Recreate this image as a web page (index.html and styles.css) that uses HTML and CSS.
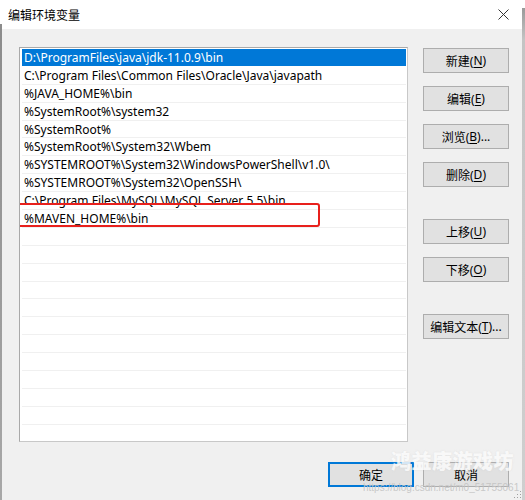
FILE: index.html
```html
<!DOCTYPE html>
<html lang="zh-CN">
<head>
<meta charset="utf-8">
<title>编辑环境变量</title>
<link rel="stylesheet" href="styles.css">
</head>
<body>
<div class="screen">
  <div class="edge-left"></div>
  <div class="dialog">
    <div class="titlebar">
      <span class="title">编辑环境变量</span>
      <svg class="close" width="11" height="11" viewBox="0 0 11 11"><path d="M0.5 0.5 L10.5 10.5 M10.5 0.5 L0.5 10.5" stroke="#333" stroke-width="1" fill="none"/></svg>
    </div>
    <div class="content">
      <div class="main">
        <div class="list">
          <div class="row selected">D:\ProgramFiles\java\jdk-11.0.9\bin</div>
          <div class="row">C:\Program Files\Common Files\Oracle\Java\javapath</div>
          <div class="row">%JAVA_HOME%\bin</div>
          <div class="row">%SystemRoot%\system32</div>
          <div class="row">%SystemRoot%</div>
          <div class="row">%SystemRoot%\System32\Wbem</div>
          <div class="row">%SYSTEMROOT%\System32\WindowsPowerShell\v1.0\</div>
          <div class="row">%SYSTEMROOT%\System32\OpenSSH\</div>
          <div class="row">C:\Program Files\MySQL\MySQL Server 5.5\bin</div>
          <div class="row">%MAVEN_HOME%\bin</div>
          <div class="row"></div><div class="row"></div><div class="row"></div><div class="row"></div>
          <div class="row"></div><div class="row"></div><div class="row"></div><div class="row"></div>
          <div class="row"></div><div class="row"></div><div class="row"></div><div class="row"></div>
          <div class="highlight"></div>
        </div>
        <div class="actions">
          <button class="btn">新建(<u>N</u>)</button>
          <button class="btn">编辑(<u>E</u>)</button>
          <button class="btn">浏览(<u>B</u>)...</button>
          <button class="btn">删除(<u>D</u>)</button>
          <button class="btn gap-big">上移(<u>U</u>)</button>
          <button class="btn">下移(<u>O</u>)</button>
          <button class="btn gap-big">编辑文本(<u>T</u>)...</button>
        </div>
      </div>
      <div class="footer">
        <button class="btn default">确定</button>
        <button class="btn">取消</button>
      </div>
    </div>
    <div class="watermark">鸿益康游戏坊</div>
    <div class="watermark-url">https://blog.csdn.net/m0_51755061</div>
    <div class="grip"></div>
  </div>
  <div class="edge-right"></div>
</div>
</body>
</html>
```
FILE: styles.css
```css
html, body {
  margin: 0;
  padding: 0;
  background: #f0f0f0;
}
.screen {
  display: flex;
  width: 525px;
  height: 500px;
  overflow: hidden;
  font-family: "Noto Sans", "Noto Sans CJK SC", sans-serif;
  font-size: 12px;
  color: #000;
}
.edge-left {
  width: 2px;
  background: linear-gradient(to bottom, #ffffff 0, #ffffff 24px, #8c8c8c 24px, #a8a8a8 100%);
}
.edge-right {
  width: 3px;
  background: linear-gradient(to bottom, #ffffff 0, #ffffff 8px, #9a9a9a 8px, #c4c4c4 40px, #cfcfcf 100%);
}
.dialog {
  flex: 1;
  position: relative;
  display: flex;
  flex-direction: column;
  background: #f0f0f0;
}
.titlebar {
  height: 29px;
  background: #ffffff;
  display: flex;
  align-items: center;
  justify-content: space-between;
  padding: 0 13px 0 6px;
}
.title {
  font-family: "Noto Sans CJK SC", sans-serif;
  font-size: 12px;
  color: #000;
  margin-top: -1px;
}
.close {
  display: block;
  margin-top: -1px;
}
.content {
  display: flex;
  flex-direction: column;
  padding: 18px 13px 0 17px;
}
.main {
  display: flex;
  gap: 15px;
}
.list {
  position: relative;
  width: 389px;
  height: 395px;
  box-sizing: border-box;
  border: 1px solid #a9a9a9;
  border-right-color: #c8c8c8;
  border-bottom-color: #c8c8c8;
  background: #ffffff;
  padding: 1px 1px 0 2px;
  overflow: hidden;
}
.row {
  height: 17.9px;
  box-sizing: border-box;
  border-bottom: 1px solid #f0f0f0;
  padding: 1px 0 0 2px;
  line-height: 16px;
  white-space: nowrap;
  overflow: hidden;
}
.row.selected {
  background: #0078d7;
  color: #ffffff;
  border-bottom-color: #ffffff;
}
.highlight {
  position: absolute;
  left: -8px;
  top: 155px;
  width: 304px;
  height: 20px;
  border: 2px solid #e8201c;
  border-radius: 3px;
}
.actions {
  display: flex;
  flex-direction: column;
  gap: 13px;
  margin-top: 1px;
}
.btn {
  width: 86px;
  height: 25px;
  box-sizing: border-box;
  border: 1px solid #adadad;
  background: #e1e1e1;
  font-family: "Noto Sans", "Noto Sans CJK SC", sans-serif;
  font-size: 12px;
  color: #000;
  padding: 0;
  display: flex;
  align-items: center;
  justify-content: center;
}
.btn u {
  text-underline-offset: 2px;
}
.btn.gap-big {
  margin-top: 19px;
}
.footer {
  display: flex;
  justify-content: flex-end;
  gap: 9px;
  margin-top: 20px;
}
.btn.default {
  border: 2px solid #0078d7;
}
.watermark {
  position: absolute;
  left: 389px;
  top: 446px;
  font-family: "Noto Sans CJK SC", sans-serif;
  font-weight: 900;
  font-size: 20px;
  letter-spacing: 0.5px;
  color: rgba(255, 255, 255, 0.8);
  text-shadow: 0 0 2px rgba(200, 200, 200, 0.4);
  white-space: nowrap;
}
.watermark-url {
  position: absolute;
  left: 361px;
  top: 482px;
  font-family: "Liberation Sans", sans-serif;
  font-size: 10px;
  color: rgba(195, 195, 195, 0.9);
  white-space: nowrap;
}
.grip {
  position: absolute;
  right: 1px;
  bottom: 2px;
  width: 8px;
  height: 8px;
  background:
    radial-gradient(circle, #a0a0a0 0.8px, transparent 1px) 0 0 / 3px 3px;
  clip-path: polygon(100% 0, 100% 100%, 0 100%);
}
```
